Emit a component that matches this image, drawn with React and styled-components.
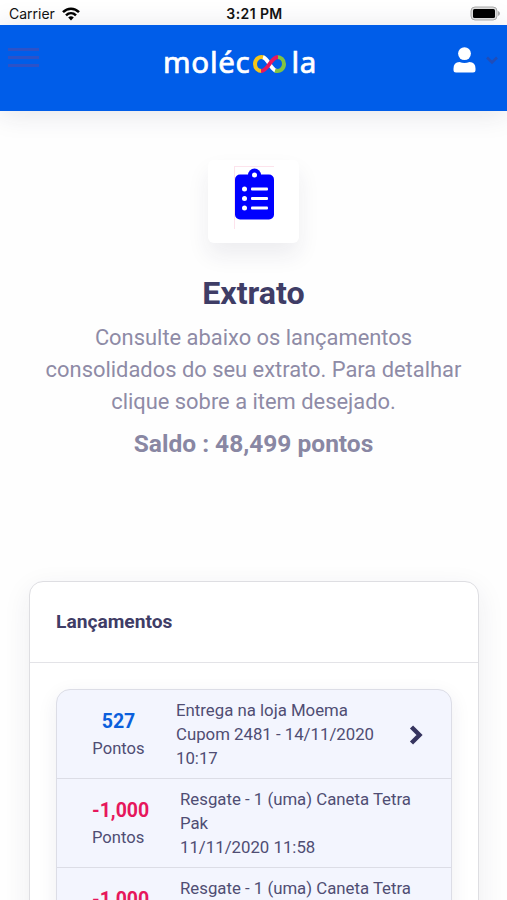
import React from 'react';
import styled, { createGlobalStyle } from 'styled-components';

const GlobalStyle = createGlobalStyle`
  * {
    box-sizing: border-box;
  }
  body {
    margin: 0;
    overflow: hidden;
    background-color: #fefefe;
    font-family: Roboto, 'Liberation Sans', sans-serif;
    color: #3f3d66;
  }
  h1, h2, p {
    margin: 0;
  }
  svg {
    display: block;
    flex-shrink: 0;
  }
`
const Page = styled.div`
  width: 100%;
  height: 900px;
  overflow: hidden;
`
/*Phone status bar*/
const StatusBar = styled.div`
  display: grid;
  grid-template-columns: 1fr auto 1fr;
  align-items: center;
  height: 25px;
  padding: 2px 7px 0 9px;
  background-color: #fff;
  color: #111;
  font-family: Inter, sans-serif;
  font-size: 14px;
`
const Carrier = styled.div`
  display: flex;
  align-items: center;
  gap: 7px;
`
const Clock = styled.div`
  font-size: 14px;
  font-weight: 600;
  letter-spacing: 0.4px;
`
const Battery = styled.div`
  justify-self: end;
`
/*Header settings*/
const Header = styled.header`
  display: flex;
  justify-content: space-between;
  height: 86px;
  padding: 0 9px 0 8px;
  background-color: #005de9;
  box-shadow: 0 2px 26px rgba(40, 40, 80, 0.13);
`
const MenuButton = styled.button`
  display: flex;
  flex-direction: column;
  gap: 5px;
  width: 31px;
  height: min-content;
  margin-top: 23px;
  padding: 0;
  border: none;
  background: none;
`
const MenuLine = styled.span`
  height: 3px;
  background-color: #2c52c8;
`
const Logo = styled.div`
  display: flex;
  align-items: flex-start;
  height: 40px;
  margin: 17px 12px 0 0;
  color: #fff;
  font-family: 'Noto Sans', sans-serif;
  font-size: 29.5px;
  line-height: 40px;
  letter-spacing: 0.7px;
  -webkit-text-stroke: 0.7px #fff;
`
const Infinity = styled.svg`
  margin: 13px 5px 0 3px;
`
const Account = styled.div`
  display: flex;
  gap: 10px;
  padding-top: 22px;
`
const Caret = styled.svg`
  margin-top: 9px;
`
/*Intro settings*/
const Intro = styled.section`
  display: flex;
  flex-direction: column;
  align-items: center;
  height: 470px;
  padding-top: 49px;
  text-align: center;
`
const IconCard = styled.div`
  display: flex;
  justify-content: center;
  width: 91px;
  height: 83px;
  padding-top: 6px;
  border-radius: 6px;
  background-color: #fff;
  box-shadow: 0 12px 22px rgba(40, 40, 80, 0.08);
`
const IconFrame = styled.div`
  width: 40px;
  height: 63px;
  border-top: 1px solid #fde3ec;
  border-left: 1px solid #fde3ec;
`
const Title = styled.h1`
  margin-top: 30px;
  font-size: 32.2px;
  font-weight: 700;
  line-height: 40px;
`
const Description = styled.p`
  width: 430px;
  margin-top: 9px;
  color: #8e8ba6;
  font-size: 21.9px;
  line-height: 32px;
`
const Balance = styled.p`
  margin-top: 10px;
  color: #8987a3;
  font-size: 24.5px;
  font-weight: 700;
  line-height: 32px;
`
/*Statement card settings*/
const Card = styled.section`
  width: 450px;
  margin: 0 0 0 29px;
  border: 1px solid #dedee2;
  border-radius: 14px;
  background-color: #fff;
  box-shadow: 0 8px 28px rgba(40, 40, 80, 0.08);
`
const CardHeader = styled.div`
  display: flex;
  align-items: center;
  height: 81px;
  padding: 0 26px 2px;
  border-bottom: 1px solid #e3e3e7;
`
const CardTitle = styled.h2`
  font-size: 19.2px;
  font-weight: 700;
`
const Entries = styled.div`
  margin: 26px 26px 0;
  border: 1px solid #dcdde6;
  border-radius: 14px;
  background-color: #f3f5fe;
  box-shadow: 0 6px 20px rgba(40, 40, 80, 0.08);
`
const Entry = styled.div`
  display: flex;
  height: 89px;
  border-bottom: 1px solid #dcdde6;
`
const Points = styled.div`
  width: 123px;
  padding-top: 18px;
  text-align: ${({ $credit }) => ($credit ? 'center' : 'left')};
  padding-left: ${({ $credit }) => ($credit ? '0' : '35px')};
`
const Amount = styled.div`
  color: ${({ $credit }) => ($credit ? '#0b5fdc' : '#e6175c')};
  font-size: 19.5px;
  font-weight: 700;
  line-height: 27px;
`
const Unit = styled.div`
  font-size: 16.6px;
  line-height: 27px;
  color: #4f4d73;
`
const Details = styled.div`
  width: ${({ $credit }) => ($credit ? '214px' : '242px')};
  margin-left: ${({ $credit }) => ($credit ? '-4px' : '0')};
  padding-top: 7.6px;
  color: #4f4d73;
  font-size: 16.8px;
  line-height: 24.4px;
  white-space: nowrap;
`
const Chevron = styled.svg`
  margin: 35px 0 0 19px;
`

const entries = [
  { amount: '527', credit: true, lines: ['Entrega na loja Moema', 'Cupom 2481 - 14/11/2020', '10:17'] },
  { amount: '-1,000', lines: ['Resgate - 1 (uma) Caneta Tetra', 'Pak', '11/11/2020 11:58'] },
  { amount: '-1,000', lines: ['Resgate - 1 (uma) Caneta Tetra'] },
]

function Status() {
  return (
    <StatusBar>
      <Carrier>
        <span>Carrier</span>
        <svg width="18" height="14" viewBox="0 0 18 14" fill="none" stroke="#000" strokeWidth="2.5">
          <path d="M1 5.2C5.6 .5 12.4 .5 17 5.2" />
          <path d="M4 8.3C6.9 5.5 11.1 5.5 14 8.3" />
          <path d="M6.2 10.5Q9 8.2 11.8 10.5L9 13.5Z" fill="#000" stroke="none" />
        </svg>
      </Carrier>
      <Clock>3:21 PM</Clock>
      <Battery>
        <svg width="31" height="15" viewBox="0 0 31 15">
          <rect x="2" y="1" width="26" height="13" rx="4" fill="#ddd" stroke="#aaa" />
          <rect x="4" y="3" width="22" height="9" rx="1.5" fill="#000" />
          <path d="M29 5v5q2-.8 2-2.5T29 5z" fill="#aaa" />
        </svg>
      </Battery>
    </StatusBar>
  )
}

function TopBar() {
  return (
    <Header>
      <MenuButton aria-label="Menu">
        <MenuLine />
        <MenuLine />
        <MenuLine />
      </MenuButton>
      <Logo>
        <span>moléc</span>
        <Infinity width="33" height="18" viewBox="0 0 33 18" fill="none" strokeWidth="4">
          <path d="M11 2.6C6 .8 2 4.5 2 9C2 13 5 16 9 16" stroke="#f5c518" />
          <path d="M10 2.3C15 3.5 17.5 14 23 15.8" stroke="#fff" />
          <path d="M24 2C28 2 31 5 31 9C31 13.5 27 17.2 22 15.5" stroke="#82c341" />
          <path d="M8 16C15.5 16 17.5 2 25 2" stroke="#e9185d" />
        </Infinity>
        <span>la</span>
      </Logo>
      <Account>
        <svg width="23" height="26" viewBox="0 0 23 26" fill="#fff">
          <circle cx="11.5" cy="6.6" r="6.4" />
          <path d="M6.5 15Q11.5 17 16.5 15Q22.5 15.4 22.5 21.5V23Q22.5 25.5 20 25.5H3Q.5 25.5 .5 23V21.5Q.5 15.4 6.5 15Z" />
        </svg>
        <Caret width="12" height="9" viewBox="0 0 12 9" fill="none" stroke="#204db8" strokeWidth="2.6">
          <path d="M1 1.5L6 6.5L11 1.5" />
        </Caret>
      </Account>
    </Header>
  )
}

function ClipboardIcon() {
  return (
    <svg width="39" height="53" viewBox="0 0 39 53">
      <circle cx="19.5" cy="8" r="6.5" fill="#00f" />
      <rect x="0" y="7.5" width="39" height="45" rx="5" fill="#00f" />
      <g fill="#fff">
        <circle cx="19.5" cy="8" r="2.5" />
        <circle cx="9.5" cy="22" r="2.5" />
        <circle cx="9.5" cy="31.5" r="2.5" />
        <circle cx="9.5" cy="41" r="2.5" />
        <rect x="16" y="20.5" width="17" height="3" rx="1" />
        <rect x="16" y="30" width="17" height="3" rx="1" />
        <rect x="16" y="39.5" width="17" height="3" rx="1" />
      </g>
    </svg>
  )
}

function App() {
  return (
    <Page>
      <GlobalStyle />
      <Status />
      <TopBar />
      <Intro>
        <IconCard>
          <IconFrame>
            <ClipboardIcon />
          </IconFrame>
        </IconCard>
        <Title>Extrato</Title>
        <Description>
          Consulte abaixo os lançamentos<br />
          consolidados do seu extrato. Para detalhar<br />
          clique sobre a item desejado.
        </Description>
        <Balance>Saldo : 48,499 pontos</Balance>
      </Intro>
      <Card>
        <CardHeader>
          <CardTitle>Lançamentos</CardTitle>
        </CardHeader>
        <Entries>
          {entries.map(({ amount, credit, lines }, i) => (
            <Entry key={i}>
              <Points $credit={credit}>
                <Amount $credit={credit}>{amount}</Amount>
                <Unit>Pontos</Unit>
              </Points>
              <Details $credit={credit}>
                {lines.map(line => <div key={line}>{line}</div>)}
              </Details>
              {credit && (
                <Chevron width="15" height="20" viewBox="0 0 15 20" fill="none" stroke="#36345f" strokeWidth="4.4">
                  <path d="M2.5 2L10.5 10L2.5 18" />
                </Chevron>
              )}
            </Entry>
          ))}
        </Entries>
      </Card>
    </Page>
  )
}
export default App;
